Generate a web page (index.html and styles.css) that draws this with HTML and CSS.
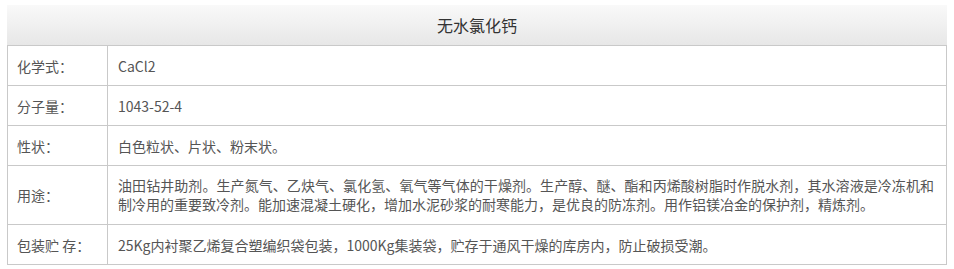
FILE: index.html
```html
<!DOCTYPE html>
<html lang="zh-CN">
<head>
<meta charset="utf-8">
<title>无水氯化钙</title>
<link rel="stylesheet" href="styles.css">
</head>
<body>
<div class="spec">
  <div class="spec-title">无水氯化钙</div>
  <div class="spec-grid">
    <div class="label">化学式：</div>
    <div class="value">CaCl2</div>
    <div class="label">分子量：</div>
    <div class="value">1043-52-4</div>
    <div class="label">性状：</div>
    <div class="value">白色粒状、片状、粉末状。</div>
    <div class="label tall">用途：</div>
    <div class="value tall">
      <p class="line line-full">油田钻井助剂。生产氮气、乙炔气、氯化氢、氧气等气体的干燥剂。生产醇、醚、酯和丙烯酸树脂时作脱水剂，其水溶液是冷冻机和</p>
      <p class="line">制冷用的重要致冷剂。能加速混凝土硬化，增加水泥砂浆的耐寒能力，是优良的防冻剂。用作铝镁冶金的保护剂，精炼剂。</p>
    </div>
    <div class="label">包装贮 存：</div>
    <div class="value">25Kg内衬聚乙烯复合塑编织袋包装，1000Kg集装袋，贮存于通风干燥的库房内，防止破损受潮。</div>
  </div>
</div>
</body>
</html>
```

FILE: styles.css
```css
html, body {
  margin: 0;
  padding: 0;
  background: #ffffff;
}
body {
  padding: 5px 7px;
  font-family: "Noto Sans CJK SC", "Noto Sans", sans-serif;
  font-size: 14px;
  color: #555555;
}
.spec {
  width: 940px;
}
.spec-title {
  height: 40px;
  line-height: 40px;
  text-align: center;
  font-size: 16px;
  color: #333333;
  background: linear-gradient(to bottom, #f9f9f9, #e7e7e7);
  border-bottom: 1px solid #c9c9c9;
}
.spec-grid {
  display: grid;
  grid-template-columns: 101px 1fr;
}
.label, .value {
  display: flex;
  align-items: center;
  height: 39px;
  padding: 0 10px;
  border-bottom: 1px solid #c9c9c9;
  border-right: 1px solid #c9c9c9;
  white-space: nowrap;
}
.label {
  border-left: 1px solid #c9c9c9;
  padding-left: 9px;
}
.tall {
  height: 58px;
}
.value.tall {
  flex-direction: column;
  align-items: stretch;
  justify-content: center;
}
.line {
  margin: 0;
  line-height: 19px;
}
.line-full {
  text-align: justify;
  text-align-last: justify;
  margin-right: 2px;
}
```
